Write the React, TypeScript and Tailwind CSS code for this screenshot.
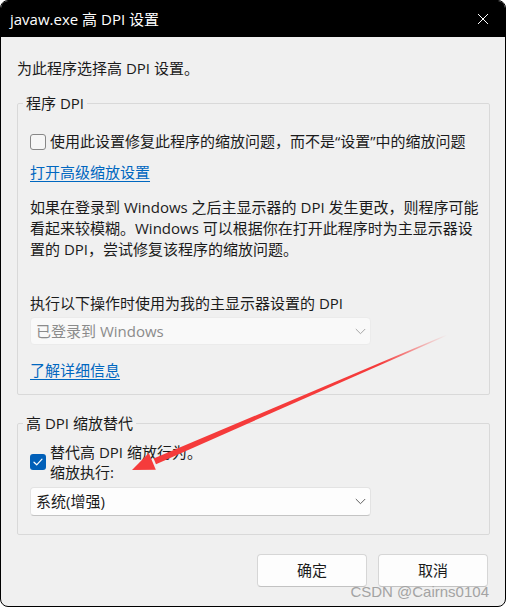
import clsx from "clsx";

function Checkbox({ checked = false }: { checked?: boolean }) {
	if (checked) {
		return (
			<span className="flex h-4 w-4 shrink-0 items-center justify-center rounded-[3px] bg-[#005fb8]">
				<svg width="10" height="8" viewBox="0 0 10 8" fill="none">
					<path d="M1 4.2 L3.7 6.8 L9 1.2" stroke="#fff" strokeWidth="1.2" strokeLinecap="round" strokeLinejoin="round" />
				</svg>
			</span>
		);
	}

	return <span className="h-4 w-4 shrink-0 rounded-[3px] border border-[#878787] bg-[#f6f6f6]" />;
}

function ComboBox({ value, disabled = false }: { value: string; disabled?: boolean }) {
	return (
		<div
			className={clsx(
				"flex w-[341px] items-center justify-between rounded-[4px] border pl-[5px] pr-[4px]",
				disabled
					? "h-[28px] border-[#ebebeb] bg-[#f9f9f9] text-[#8b8b8b]"
					: "h-[29px] border-[#e3e3e3] border-b-[#c4c4c4] bg-[#fdfdfd] text-[#1b1b1b]"
			)}
		>
			<span className="leading-[21px]">{value}</span>
			<svg width="11" height="7" viewBox="0 0 11 7" fill="none">
				<path d="M0.8 1 L5.5 5.7 L10.2 1" stroke={disabled ? "#a6a6a6" : "#5f5f5f"} strokeWidth="1" />
			</svg>
		</div>
	);
}

function Link({ children }: { children: string }) {
	return <a className="block w-fit leading-[21px] text-[#0067c0] underline underline-offset-[3px]">{children}</a>;
}

function DialogButton({ children }: { children: string }) {
	return (
		<button
			type="button"
			className="flex h-[33px] w-[110px] items-center justify-center rounded-[4px] border border-[#d6d6d6] border-b-[#c2c2c2] bg-[#fdfdfd] text-[#1b1b1b]"
		>
			{children}
		</button>
	);
}

function Arrow() {
	// red annotation drawn over the dialog
	return (
		<svg className="pointer-events-none absolute inset-0" width="506" height="607" viewBox="0 0 506 607">
			<defs>
				<linearGradient id="fade" x1="447" y1="335" x2="380" y2="364" gradientUnits="userSpaceOnUse">
					<stop offset="0" stopColor="#f53b3b" stopOpacity="0" />
					<stop offset="1" stopColor="#f53b3b" stopOpacity="1" />
				</linearGradient>
			</defs>
			<polygon points="447.2,335.4 446.8,334.6 153.6,458.6 156,464.2" fill="url(#fade)" />
			<polygon points="132,470 148.8,453 155.8,469.8" fill="#f53b3b" />
		</svg>
	);
}

function App() {
	return (
		<div className="relative h-[607px] w-[506px] bg-white font-['Open_Sans','Noto_Sans_CJK_SC',sans-serif] text-[15px] text-[#1b1b1b]">
			<div className="flex h-full flex-col overflow-hidden rounded-[8px] border border-black bg-[#f0f0f0]">
				<header className="flex h-[36px] shrink-0 items-center justify-between bg-black pl-[9px] pr-[16px] text-white">
					<span className="leading-[21px]">javaw.exe 高 DPI 设置</span>
					<svg width="12" height="12" viewBox="0 0 12 12" fill="none">
						<path d="M1 1 L11 11 M11 1 L1 11" stroke="#fff" strokeWidth="1" />
					</svg>
				</header>

				<main className="flex flex-col pl-[16px] pr-[15px] pt-[21px]">
					<p className="leading-[21px]">为此程序选择高 DPI 设置。</p>

					<fieldset className="mt-[14px] rounded-[2px] border border-[#d9d9d9] pb-[13px] pl-[5px] pr-[5px] pt-[17px]">
						<legend className="px-[3px] leading-[21px]">程序 DPI</legend>
						<div className="pl-[7px]">
							<label className="flex items-center gap-[4px] whitespace-nowrap leading-[21px]">
								<Checkbox />
								<span>使用此设置修复此程序的缩放问题，而不是“设置”中的缩放问题</span>
							</label>

							<div className="mt-[10px]">
								<Link>打开高级缩放设置</Link>
							</div>

							<p className="mt-[14px] whitespace-nowrap leading-[21px]">
								<span className="block">如果在登录到 Windows 之后主显示器的 DPI 发生更改，则程序可能</span>
								<span className="block">看起来较模糊。Windows 可以根据你在打开此程序时为主显示器设</span>
								<span className="block">置的 DPI，尝试修复该程序的缩放问题。</span>
							</p>

							<p className="mt-[33px] leading-[21px]">执行以下操作时使用为我的主显示器设置的 DPI</p>
							<div className="mt-[3px]">
								<ComboBox value="已登录到 Windows" disabled />
							</div>

							<div className="mt-[15px]">
								<Link>了解详细信息</Link>
							</div>
						</div>
					</fieldset>

					<fieldset className="mt-[18px] rounded-[2px] border border-[#d9d9d9] pb-[18px] pl-[5px] pr-[5px] pt-[8px]">
						<legend className="px-[3px] leading-[21px]">高 DPI 缩放替代</legend>
						<div className="pl-[7px]">
							<label className="flex items-center gap-[4px] leading-[20px]">
								<Checkbox checked />
								<span className="flex flex-col">
									<span>替代高 DPI 缩放行为。</span>
									<span>缩放执行:</span>
								</span>
							</label>
							<div className="mt-[5px]">
								<ComboBox value="系统(增强)" />
							</div>
						</div>
					</fieldset>

					<div className="mt-[19px] flex justify-end gap-[11px] pr-[2px]">
						<DialogButton>确定</DialogButton>
						<DialogButton>取消</DialogButton>
					</div>
				</main>
			</div>

			<span className="absolute bottom-[8px] right-[17px] font-['Liberation_Sans',sans-serif] text-[15px] leading-[15px] text-[#a3a3a3]">
				CSDN @Cairns0104
			</span>

			<Arrow />
		</div>
	);
}

export default App;
